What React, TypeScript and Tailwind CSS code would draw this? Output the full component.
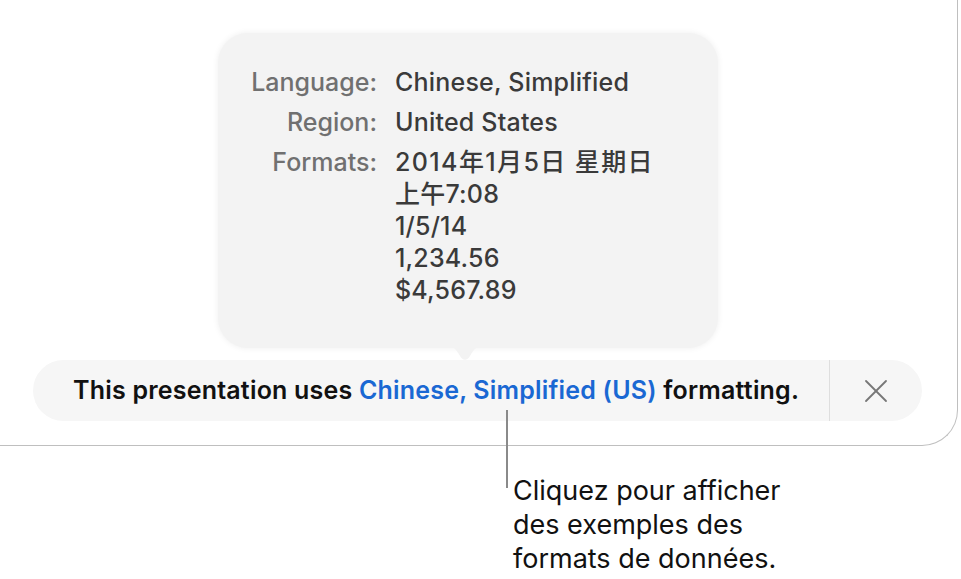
import { X } from 'lucide-react';

const font = { fontFamily: 'Inter, "Noto Sans CJK SC", sans-serif' };

const FormatsPopover = () => (
  <div className="relative ml-[185px] h-[315px] w-[500px] rounded-[30px] bg-[#f3f3f3] pt-[29px] shadow-[0_0_6px_rgba(0,0,0,0.07)]">
    <div className="grid grid-cols-[159px_1fr] gap-x-[18px] text-[25px] font-medium">
      <div className="text-right leading-[40px] text-[#707070]">Language:</div>
      <div className="leading-[40px] tracking-[0.2px] text-[#3a3a3a]">Chinese, Simplified</div>
      <div className="text-right leading-[40px] text-[#707070]">Region:</div>
      <div className="leading-[40px] tracking-[0.2px] text-[#3a3a3a]">United States</div>
      <div className="mt-[4px] text-right leading-[32px] text-[#707070]">Formats:</div>
      <div className="mt-[4px] leading-[32px] tracking-[0.2px] text-[#3a3a3a]">
        <div className="tracking-[1.4px]">2014年1月5日 星期日</div>
        <div>上午7:08</div>
        <div>1/5/14</div>
        <div>1,234.56</div>
        <div>$4,567.89</div>
      </div>
    </div>
    <svg className="absolute left-[230px] top-[313px]" width="34" height="18" viewBox="0 0 34 18">
      <path d="M0 0 H34 C28 1 26 3 22 10 C19 15 15 15 12 10 C8 3 6 1 0 0 Z" fill="#f3f3f3" />
    </svg>
  </div>
);

const LanguageBar = () => (
  <div className="mt-[12px] flex h-[61px] w-[889px] items-center rounded-full bg-[#f6f6f6]">
    <div className="flex-1 whitespace-nowrap pl-[40px] text-[25px] font-semibold tracking-[0.2px] text-[#111]">
      This presentation uses <span className="text-[#1a68d3]">Chinese, Simplified (US)</span> formatting.
    </div>
    <div className="h-full w-px bg-[#dedede]" />
    <div className="flex w-[92px] items-center justify-center text-[#777]">
      <X size={40} strokeWidth={1.1} />
    </div>
  </div>
);

export default function App() {
  return (
    <div className="relative h-[579px] w-[961px] overflow-hidden bg-white" style={font}>
      <div className="h-[446px] w-[958px] rounded-br-[36px] border-b border-r border-[#bfbfbf] pl-[33px] pt-[33px]">
        <FormatsPopover />
        <LanguageBar />
      </div>
      <div className="absolute left-[506px] top-[410px] h-[78px] w-[2px] bg-[#8a8a8a]" />
      <div className="pl-[513px] pt-[28px] text-[27px] leading-[34px] text-[#111]">
        Cliquez pour afficher
        <br />
        des exemples des
        <br />
        formats de données.
      </div>
    </div>
  );
}
